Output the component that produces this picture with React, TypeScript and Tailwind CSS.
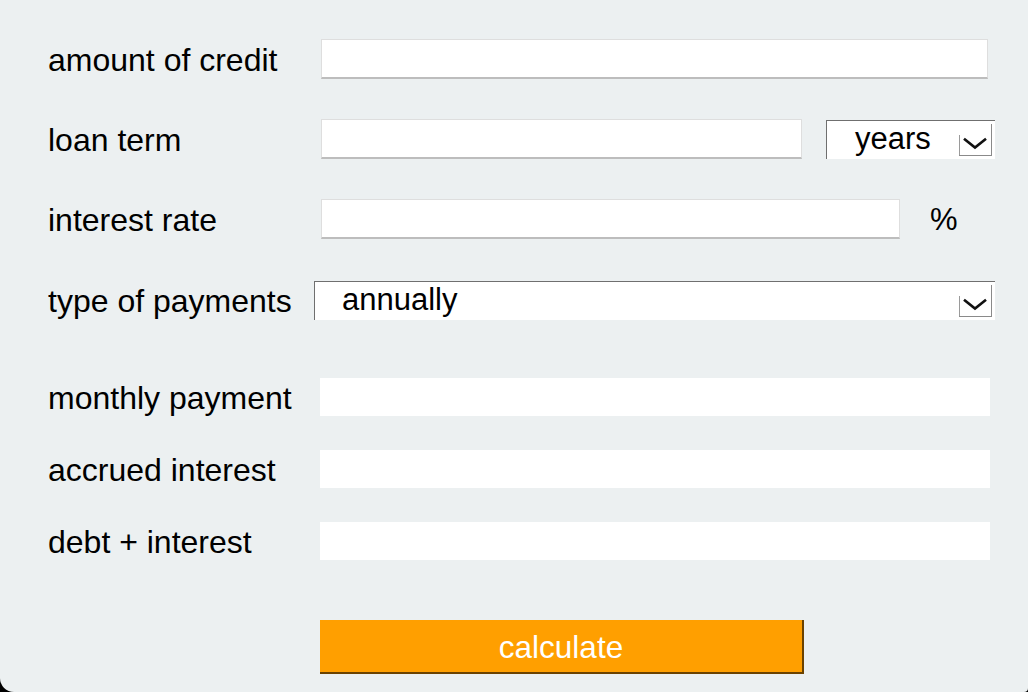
import React from "react";

const font = { fontFamily: '"Liberation Sans", Arial, Helvetica, sans-serif' };

function Chevron() {
  return (
    <svg width="24" height="13" viewBox="0 0 24 13" fill="none">
      <path d="M2 2.5 L12 10.5 L22 2.5" stroke="#111" strokeWidth="2.6" strokeLinecap="square" />
    </svg>
  );
}

function SelectBox({ value, width, padLeft }: { value: string; width: string; padLeft: string }) {
  return (
    <div className={`${width} h-[39px] bg-white border-t border-l border-[#6f6f6f] relative flex items-start`}>
      <span className={`${padLeft} pt-[1px] text-[31px] leading-[34px] text-black`}>{value}</span>
      <div className="absolute right-[3px] top-[3px] w-[33px] h-[32px] border-r border-b border-[#8a8a8a] flex items-end justify-center pb-[5px]">
        <div className="absolute left-0 bottom-0 h-[20px] border-l border-[#9a9a9a]" />
        <Chevron />
      </div>
    </div>
  );
}

function TextInput({ width }: { width: string }) {
  return (
    <input
      type="text"
      className={`${width} h-[40px] bg-white border border-[#dedede] border-b-2 border-b-[#bdbdbd] outline-none`}
    />
  );
}

function Label({ children }: { children: React.ReactNode }) {
  return <div className="w-[272px] shrink-0 text-[32px] text-black leading-none pt-[2px]">{children}</div>;
}

export default function App() {
  return (
    <div className="w-[1028px] h-[692px] bg-black" style={font}>
      <div className="w-full h-full bg-[#ecf0f1] rounded-bl-[14px] rounded-br-[4px] pl-[48px] pt-[39px] flex flex-col">
        <div className="flex items-center h-[40px]">
          <Label>amount of credit</Label>
          <div className="pl-[1px]">
            <TextInput width="w-[667px]" />
          </div>
        </div>

        <div className="flex items-center h-[40px] mt-[40px]">
          <Label>loan term</Label>
          <div className="pl-[1px] flex items-center gap-[24px]">
            <TextInput width="w-[481px]" />
            <SelectBox value="years" width="w-[169px]" padLeft="pl-[28px]" />
          </div>
        </div>

        <div className="flex items-center h-[40px] mt-[40px]">
          <Label>interest rate</Label>
          <div className="pl-[1px] flex items-center">
            <TextInput width="w-[579px]" />
            <span className="ml-[30px] text-[31px] leading-none text-black">%</span>
          </div>
        </div>

        <div className="flex items-center h-[40px] mt-[41px]">
          <Label>type of payments</Label>
          <div className="-ml-[6px]">
            <SelectBox value="annually" width="w-[681px]" padLeft="pl-[27px]" />
          </div>
        </div>

        <div className="flex flex-col gap-[34px] mt-[58px]">
          {["monthly payment", "accrued interest", "debt + interest"].map((t) => (
            <div key={t} className="flex items-center h-[38px]">
              <Label>{t}</Label>
              <div className="w-[670px] h-[38px] bg-white" />
            </div>
          ))}
        </div>

        <div className="mt-[60px] pl-[272px]">
          <button className="w-[484px] h-[54px] bg-[#ff9f00] border-r-2 border-b-2 border-[#6b4200] text-white text-[31.5px] leading-none pt-[4px]">
            calculate
          </button>
        </div>
      </div>
    </div>
  );
}
